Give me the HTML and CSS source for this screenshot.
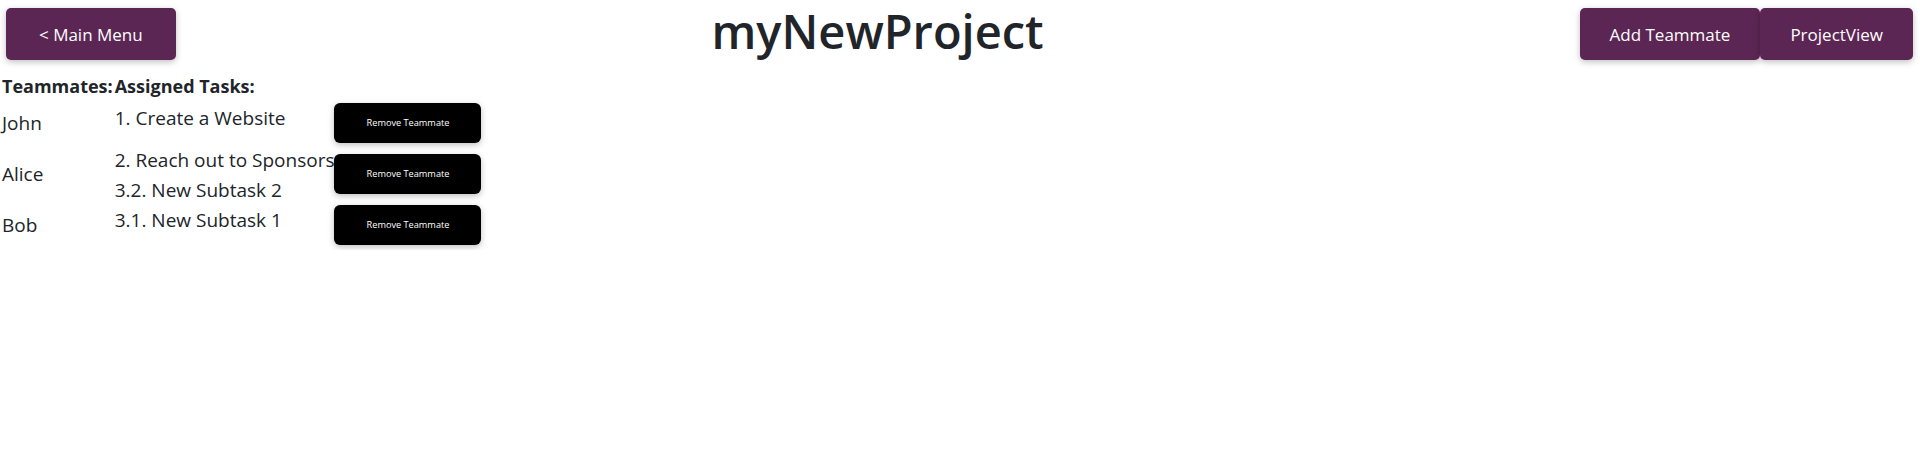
FILE: index.html
```html
<!DOCTYPE html>
<html lang="en">
  <head>
    <meta charset="UTF-8" />
    <meta name="viewport" content="width=device-width, initial-scale=1.0" />
    <title>myNewProject</title>
    <link rel="stylesheet" href="styles.css">
  </head>
  <body>
    <header class="topbar">
      <button class="nav-button main-menu">&lt; Main Menu</button>
      <h1 class="project-title">myNewProject</h1>
      <div class="topbar-actions">
        <button class="nav-button">Add Teammate</button>
        <button class="nav-button">ProjectView</button>
      </div>
    </header>

    <section class="roster">
      <div class="roster-heading">Teammates:</div>
      <div class="roster-heading">Assigned Tasks:</div>
      <div></div>

      <div class="teammate-name">John</div>
      <div class="task-list">
        <div class="task-group">
          <div class="task">1. Create a Website</div>
        </div>
        <div class="task-group">
          <div class="task">2. Reach out to Sponsors</div>
          <div class="task">3.2. New Subtask 2</div>
        </div>
        <div class="task-group">
          <div class="task">3.1. New Subtask 1</div>
        </div>
      </div>
      <div class="remove-cell"><button class="remove-button">Remove Teammate</button></div>

      <div class="teammate-name">Alice</div>
      <div class="remove-cell"><button class="remove-button">Remove Teammate</button></div>

      <div class="teammate-name">Bob</div>
      <div class="remove-cell"><button class="remove-button">Remove Teammate</button></div>
    </section>
  </body>
</html>
```

FILE: styles.css
```css
body {
  margin: 0;
  font-family: "Segoe UI", "Open Sans", Roboto, sans-serif;
  color: #212529;
  background: white;
}
.topbar {
  display: flex;
  justify-content: space-between;
  align-items: flex-start;
  padding: 8px 7px 0 6px;
}
.topbar-actions {
  display: flex;
}
.nav-button {
  height: 52px;
  padding: 0 30px;
  font-family: inherit;
  font-size: 17px;
  color: white;
  background-color: #5c2654;
  border: none;
  border-radius: 5px;
  box-shadow: 0 2px 6px rgba(0, 0, 0, 0.25);
  cursor: pointer;
}
.main-menu {
  padding: 0 33px;
}
.project-title {
  margin: 0;
  font-size: 47px;
  font-weight: 600;
  line-height: 46px;
  color: #212529;
}
.roster {
  display: grid;
  grid-template-columns: auto auto auto;
  grid-template-rows: 22px 51px 51px 51px;
  justify-content: start;
  margin-top: 15px;
  padding-left: 2px;
}
.roster-heading {
  font-size: 18px;
  font-weight: 700;
  line-height: 22px;
  padding-right: 2px;
}
.teammate-name {
  display: flex;
  align-items: center;
  font-size: 19px;
}
.task-list {
  grid-row: 2 / span 3;
  grid-column: 2;
  padding-top: 6px;
  font-size: 19px;
}
.task {
  line-height: 30px;
}
.task-group:first-child {
  margin-bottom: 12px;
}
.remove-cell {
  grid-column: 3;
  display: flex;
  align-items: center;
}
.remove-button {
  width: 147px;
  height: 40px;
  font-family: inherit;
  font-size: 9.2px;
  color: white;
  background-color: black;
  border: none;
  border-radius: 6px;
  box-shadow: 0 2px 6px rgba(0, 0, 0, 0.25);
  cursor: pointer;
}
```
